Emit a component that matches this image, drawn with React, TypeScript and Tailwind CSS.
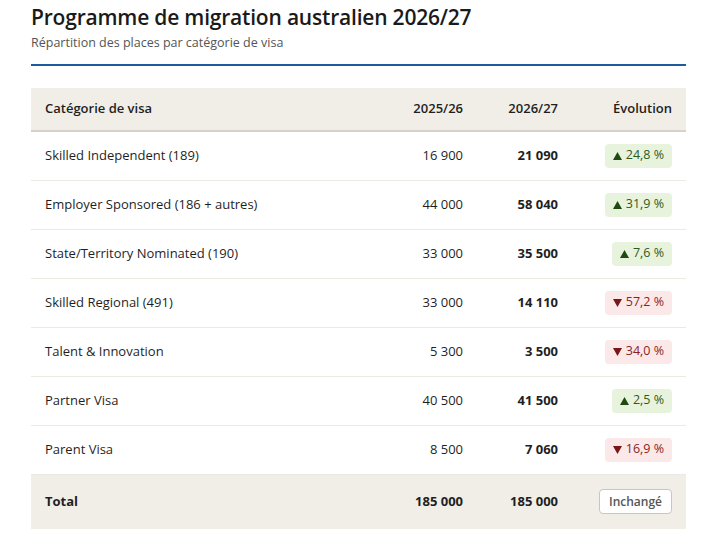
const rows = [
  { name: 'Skilled Independent (189)', prev: '16 900', next: '21 090', change: '24,8 %', up: true },
  { name: 'Employer Sponsored (186 + autres)', prev: '44 000', next: '58 040', change: '31,9 %', up: true },
  { name: 'State/Territory Nominated (190)', prev: '33 000', next: '35 500', change: '7,6 %', up: true },
  { name: 'Skilled Regional (491)', prev: '33 000', next: '14 110', change: '57,2 %', up: false },
  { name: 'Talent & Innovation', prev: '5 300', next: '3 500', change: '34,0 %', up: false },
  { name: 'Partner Visa', prev: '40 500', next: '41 500', change: '2,5 %', up: true },
  { name: 'Parent Visa', prev: '8 500', next: '7 060', change: '16,9 %', up: false },
];

function Badge({ change, up }: { change: string; up: boolean }) {
  return (
    <span
      className={`inline-flex items-center gap-[4px] rounded-[4px] px-[8px] h-[24px] text-[12.5px] ${
        up ? 'bg-[#e8f3de] text-[#2f5a1c]' : 'bg-[#fbe8e8] text-[#8a1f1f]'
      }`}
    >
      <svg width="9" height="8" viewBox="0 0 9 8" className={up ? 'fill-[#1f4a10]' : 'fill-[#7a1616]'}>
        {up ? <polygon points="4.5,0 9,8 0,8" /> : <polygon points="0,0 9,0 4.5,8" />}
      </svg>
      {change}
    </span>
  );
}

export default function App() {
  return (
    <div className="bg-white min-h-[546px] px-[31px] pt-[2px] text-[#1f1f1f]" style={{ fontFamily: '"Open Sans", "Noto Sans", sans-serif' }}>
      <h1 className="text-[21px] font-semibold leading-[30px] tracking-[-0.2px] text-[#1a1a1a]">
        Programme de migration australien 2026/27
      </h1>
      <p className="text-[12.5px] leading-[18px] mt-[2px] text-[#555]">Répartition des places par catégorie de visa</p>
      <div className="h-[2px] bg-[#1d5aa0] mt-[12px]" />

      <table className="w-full mt-[22px] border-collapse text-[13px]">
        <thead>
          <tr className="bg-[#f1eee8] border-b-2 border-[#d6d2ca]">
            <th className="text-left font-semibold h-[43px] pl-[14px] w-[351px]">Catégorie de visa</th>
            <th className="text-right font-semibold pr-[14px] w-[95px]">2025/26</th>
            <th className="text-right font-semibold pr-[14px] w-[95px]">2026/27</th>
            <th className="text-right font-semibold pr-[14px]">Évolution</th>
          </tr>
        </thead>
        <tbody>
          {rows.map((r) => (
            <tr key={r.name} className="border-b border-[#ece9e3]">
              <td className="h-[49px] pl-[14px]">{r.name}</td>
              <td className="text-right pr-[14px]">{r.prev}</td>
              <td className="text-right pr-[14px] font-bold">{r.next}</td>
              <td className="text-right pr-[14px]">
                <Badge change={r.change} up={r.up} />
              </td>
            </tr>
          ))}
          <tr className="bg-[#f1eee8]">
            <td className="h-[55px] pl-[14px] font-bold">Total</td>
            <td className="text-right pr-[14px] font-bold">185 000</td>
            <td className="text-right pr-[14px] font-bold">185 000</td>
            <td className="text-right pr-[14px]">
              <span className="inline-flex items-center h-[25px] px-[9px] rounded-[4px] border border-[#c9c6c0] bg-white text-[12px] font-semibold text-[#555]">
                Inchangé
              </span>
            </td>
          </tr>
        </tbody>
      </table>
    </div>
  );
}
